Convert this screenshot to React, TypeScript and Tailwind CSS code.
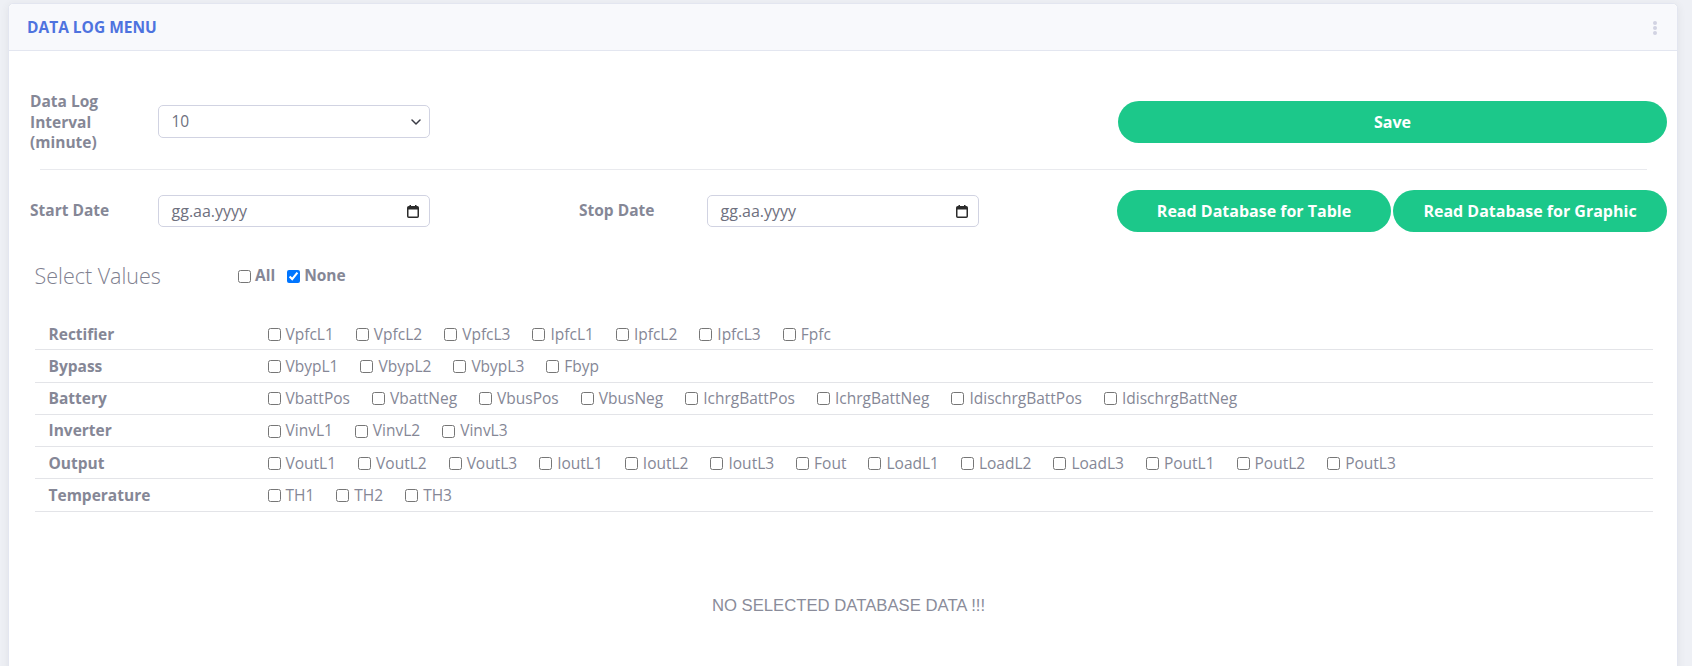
import { useState } from 'react';

const groups: { name: string; items: string[] }[] = [
  { name: 'Rectifier', items: ['VpfcL1', 'VpfcL2', 'VpfcL3', 'IpfcL1', 'IpfcL2', 'IpfcL3', 'Fpfc'] },
  { name: 'Bypass', items: ['VbypL1', 'VbypL2', 'VbypL3', 'Fbyp'] },
  {
    name: 'Battery',
    items: ['VbattPos', 'VbattNeg', 'VbusPos', 'VbusNeg', 'IchrgBattPos', 'IchrgBattNeg', 'IdischrgBattPos', 'IdischrgBattNeg'],
  },
  { name: 'Inverter', items: ['VinvL1', 'VinvL2', 'VinvL3'] },
  {
    name: 'Output',
    items: ['VoutL1', 'VoutL2', 'VoutL3', 'IoutL1', 'IoutL2', 'IoutL3', 'Fout', 'LoadL1', 'LoadL2', 'LoadL3', 'PoutL1', 'PoutL2', 'PoutL3'],
  },
  { name: 'Temperature', items: ['TH1', 'TH2', 'TH3'] },
];

function CalendarIcon() {
  return (
    <svg width="12" height="13" viewBox="0 0 12 13" className="text-[#2b2b2b]">
      <rect x="0.75" y="1.75" width="10.5" height="10.5" rx="1" fill="none" stroke="currentColor" strokeWidth="1.5" />
      <rect x="1" y="2" width="10" height="2.5" fill="currentColor" />
      <rect x="2.5" y="0" width="1.5" height="2.5" fill="currentColor" />
      <rect x="8" y="0" width="1.5" height="2.5" fill="currentColor" />
    </svg>
  );
}

function DateBox() {
  return (
    <div className="w-[272.5px] h-[32px] flex items-center justify-between pl-[13px] pr-[10px] border border-[#d1d3e2] rounded-[5px] bg-white">
      <span className="text-[16px] text-[#6e707e]">gg.aa.yyyy</span>
      <CalendarIcon />
    </div>
  );
}

export default function App() {
  const [all, setAll] = useState(false);
  const [none, setNone] = useState(true);

  return (
    <div className="min-h-screen bg-[#eef0f5] pl-[8px] pr-[14px] pt-[3px] text-[#858796]" style={{ fontFamily: '"Open Sans", "Noto Sans", sans-serif' }}>
      <div className="bg-white border border-[#e3e6f0] rounded-[5px] shadow-[0_2px_8px_rgba(58,59,69,0.08)] pb-[60px]">
        {/* Header */}
        <div className="h-[47px] flex items-center justify-between pl-[18px] pr-[20px] bg-[#f8f9fc] border-b border-[#e3e6f0] rounded-t-[5px]">
          <h6 className="text-[15.5px] font-bold text-[#4e73df] pt-[1px]">DATA LOG MENU</h6>
          <div className="flex flex-col gap-[1px] pt-[2px]">
            <span className="w-[4px] h-[4px] rounded-full bg-[#d1d3e2]" />
            <span className="w-[4px] h-[4px] rounded-full bg-[#d1d3e2]" />
            <span className="w-[4px] h-[4px] rounded-full bg-[#d1d3e2]" />
          </div>
        </div>

        <div className="pl-[21px] pr-[10px] pt-[40px]">
          {/* Interval row */}
          <div className="flex items-center">
            <div className="w-[127.5px] shrink-0">
              <div className="max-w-[100px] text-[15.5px] font-bold leading-[20.5px]">Data Log Interval (minute)</div>
            </div>
            <div className="relative w-[272.5px] shrink-0">
              <select
                defaultValue="10"
                className="w-full h-[33px] appearance-none pl-[13px] pr-[30px] border border-[#d1d3e2] rounded-[5px] bg-white text-[15.5px] text-[#6e707e] outline-none"
              >
                <option>1</option>
                <option>5</option>
                <option>10</option>
                <option>30</option>
                <option>60</option>
              </select>
              <svg width="10" height="6" viewBox="0 0 10 6" className="absolute right-[9px] top-[14px] pointer-events-none">
                <path d="M1 1l4 4 4-4" fill="none" stroke="#3a3b45" strokeWidth="1.5" strokeLinecap="round" strokeLinejoin="round" />
              </svg>
            </div>
            <button className="ml-auto w-[549px] h-[42px] rounded-full bg-[#1cc88a] text-white text-[16px] font-bold">Save</button>
          </div>

          <hr className="ml-[10px] mr-[20px] mt-[16.5px] border-t border-[#e9eaee]" />

          {/* Date row */}
          <div className="flex items-center mt-[20px]">
            <label className="w-[127.5px] shrink-0 text-[15.5px] font-bold">Start Date</label>
            <DateBox />
            <label className="ml-[149px] w-[127.5px] shrink-0 text-[15.5px] font-bold">Stop Date</label>
            <DateBox />
            <div className="ml-auto flex gap-[2px]">
              <button className="w-[274px] h-[42px] rounded-full bg-[#1cc88a] text-white text-[16px] font-bold">Read Database for Table</button>
              <button className="w-[274px] h-[42px] rounded-full bg-[#1cc88a] text-white text-[16px] font-bold">Read Database for Graphic</button>
            </div>
          </div>

          {/* Select values */}
          <div className="flex items-center h-[40px] mt-[24px] ml-[4.5px]">
            <h4 className="w-[203.5px] shrink-0 text-[21.5px] font-light text-[#7f8190]">Select Values</h4>
            <label className="flex items-center gap-[4px] text-[15.5px] font-bold">
              <input type="checkbox" checked={all} onChange={() => { setAll(!all); setNone(all); }} className="m-0 w-[13px] h-[13px]" />
              All
            </label>
            <label className="flex items-center gap-[4px] ml-[12px] text-[15.5px] font-bold">
              <input type="checkbox" checked={none} onChange={() => { setNone(!none); setAll(none); }} className="m-0 w-[13px] h-[13px]" />
              None
            </label>
          </div>

          {/* Values table */}
          <div className="mt-[22px] ml-[4.5px] mr-[14.5px]">
            {groups.map((g) => (
              <div key={g.name} className="flex items-center h-[32.3px] pt-[1px] border-b border-[#e3e4e8]">
                <div className="w-[233px] shrink-0 pl-[14px] text-[15.5px] font-bold">{g.name}</div>
                <div className="flex items-center gap-x-[22px]">
                  {g.items.map((item) => (
                    <label key={item} className="flex items-center gap-[5px] text-[15.5px]">
                      <input type="checkbox" className="m-0 w-[13px] h-[13px]" />
                      {item}
                    </label>
                  ))}
                </div>
              </div>
            ))}
          </div>

          <p className="mt-[82px] text-center text-[16.7px] leading-[24px] text-[#8a8c9a]" style={{ fontFamily: '"Liberation Sans", Arial, sans-serif' }}>
            NO SELECTED DATABASE DATA !!!
          </p>
        </div>
      </div>
    </div>
  );
}
